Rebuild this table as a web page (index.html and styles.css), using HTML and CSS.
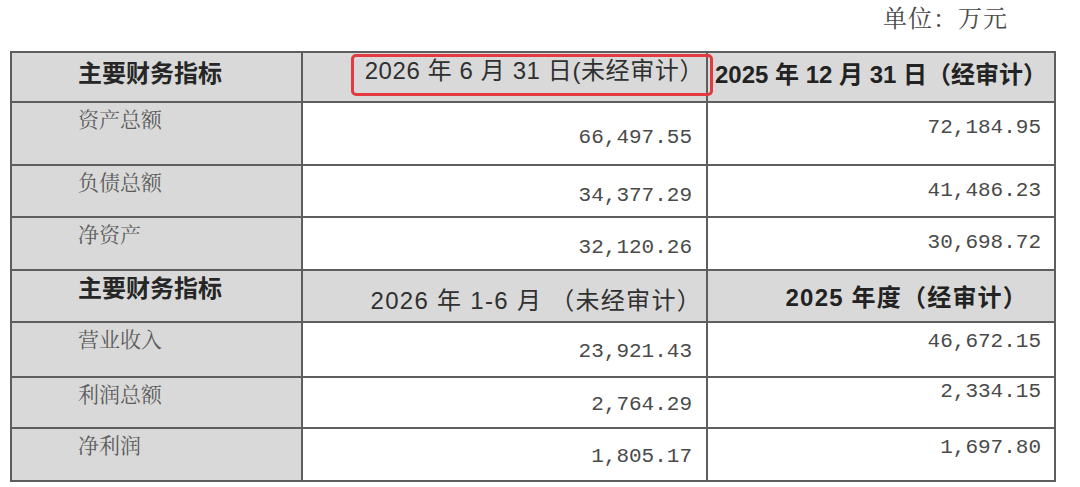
FILE: index.html
```html
<!DOCTYPE html>
<html lang="zh-CN">
<head>
<meta charset="utf-8">
<title>主要财务指标</title>
<link rel="stylesheet" href="styles.css">
</head>
<body>
<div class="page">
  <div class="unit">单位：万元</div>
  <div class="sheet">
    <div class="cell grey lab head1">主要财务指标</div>
    <div class="cell grey col2 head1 marked">2026 年 6 月 31 日(未经审计）<span class="mark"></span></div>
    <div class="cell grey col3 head1 strong">2025 年 12 月 31 日（经审计）</div>

    <div class="cell grey item">资产总额</div>
    <div class="cell num n2">66,497.55</div>
    <div class="cell num n3">72,184.95</div>

    <div class="cell grey item">负债总额</div>
    <div class="cell num n2">34,377.29</div>
    <div class="cell num n3">41,486.23</div>

    <div class="cell grey item">净资产</div>
    <div class="cell num n2">32,120.26</div>
    <div class="cell num n3">30,698.72</div>

    <div class="cell grey lab head2">主要财务指标</div>
    <div class="cell grey col2 head2">2026 年 1-6 月 （未经审计）</div>
    <div class="cell grey col3 head2 strong">2025 年度（经审计）</div>

    <div class="cell grey item">营业收入</div>
    <div class="cell num n2 s2">23,921.43</div>
    <div class="cell num n3 s2">46,672.15</div>

    <div class="cell grey item">利润总额</div>
    <div class="cell num n2 s2">2,764.29</div>
    <div class="cell num n3 s2 tight">2,334.15</div>

    <div class="cell grey item">净利润</div>
    <div class="cell num n2 s2">1,805.17</div>
    <div class="cell num n3 s2">1,697.80</div>
  </div>
</div>
</body>
</html>
```

FILE: styles.css
```css
html, body {
  margin: 0;
  padding: 0;
  background: #ffffff;
}

.page {
  width: 1080px;
  height: 487px;
  overflow: hidden;
}

.unit {
  height: 51px;
  box-sizing: border-box;
  padding: 5px 72px 0 0;
  text-align: right;
  font-family: "Noto Serif CJK SC", "Noto Sans CJK SC", serif;
  font-size: 24px;
  line-height: 24px;
  letter-spacing: 1px;
  color: #4a4a4a;
}

.sheet {
  margin-left: 10px;
  width: 1046px;
  box-sizing: border-box;
  display: grid;
  grid-template-columns: 289px 403px 346px;
  grid-template-rows: 48px 61px 50px 51px 50px 53px 49px 51px;
  gap: 2px;
  padding: 2px;
  background: #5e5e5e;
}

.cell {
  display: flex;
  align-items: flex-start;
  box-sizing: border-box;
  background: #ffffff;
  line-height: 1;
  white-space: nowrap;
}

.grey {
  background: #d9d9d9;
}

.lab {
  padding-left: 66px;
  font-family: "Noto Sans CJK SC", sans-serif;
  font-weight: 700;
  font-size: 24px;
  color: #262626;
}

.head1.lab { padding-top: 7px; }
.head2.lab { padding-top: 4px; }

.col2 {
  justify-content: flex-end;
  font-family: "Liberation Sans", "Noto Sans CJK SC", sans-serif;
  font-size: 24px;
  letter-spacing: 0.6px;
  color: #303030;
}

.col3 {
  font-family: "Liberation Sans", "Noto Sans CJK SC", sans-serif;
  font-size: 24px;
  color: #222222;
}

.strong { font-weight: 700; }

.head1.col2 { padding: 6px 2px 0 0; }
.head1.col3 { padding-top: 10px; justify-content: center; }
.head2.col2 { padding: 18px 4px 0 0; letter-spacing: 1.3px; }
.head2.col3 { padding: 15px 26px 0 0; justify-content: flex-end; letter-spacing: 1.2px; }

.marked { position: relative; }

.mark {
  position: absolute;
  left: 48px;
  top: 1px;
  width: 362px;
  height: 42px;
  box-sizing: border-box;
  border: 3px solid #e23a40;
  border-radius: 5px;
}

.item {
  padding: 5px 0 0 66px;
  font-family: "Noto Serif CJK SC", "Noto Sans CJK SC", serif;
  font-size: 21px;
  color: #5c5c5c;
}

.num {
  justify-content: flex-end;
  font-family: "Liberation Mono", monospace;
  font-size: 21px;
  color: #4a4a4a;
}

.n2 {
  align-items: center;
  padding: 8px 14px 0 0;
}

.n2.s2 { padding-top: 3px; }

.n3 { padding: 14px 13px 0 0; }
.n3.s2 { padding-top: 8px; }
.n3.tight { padding-top: 3px; }
```
